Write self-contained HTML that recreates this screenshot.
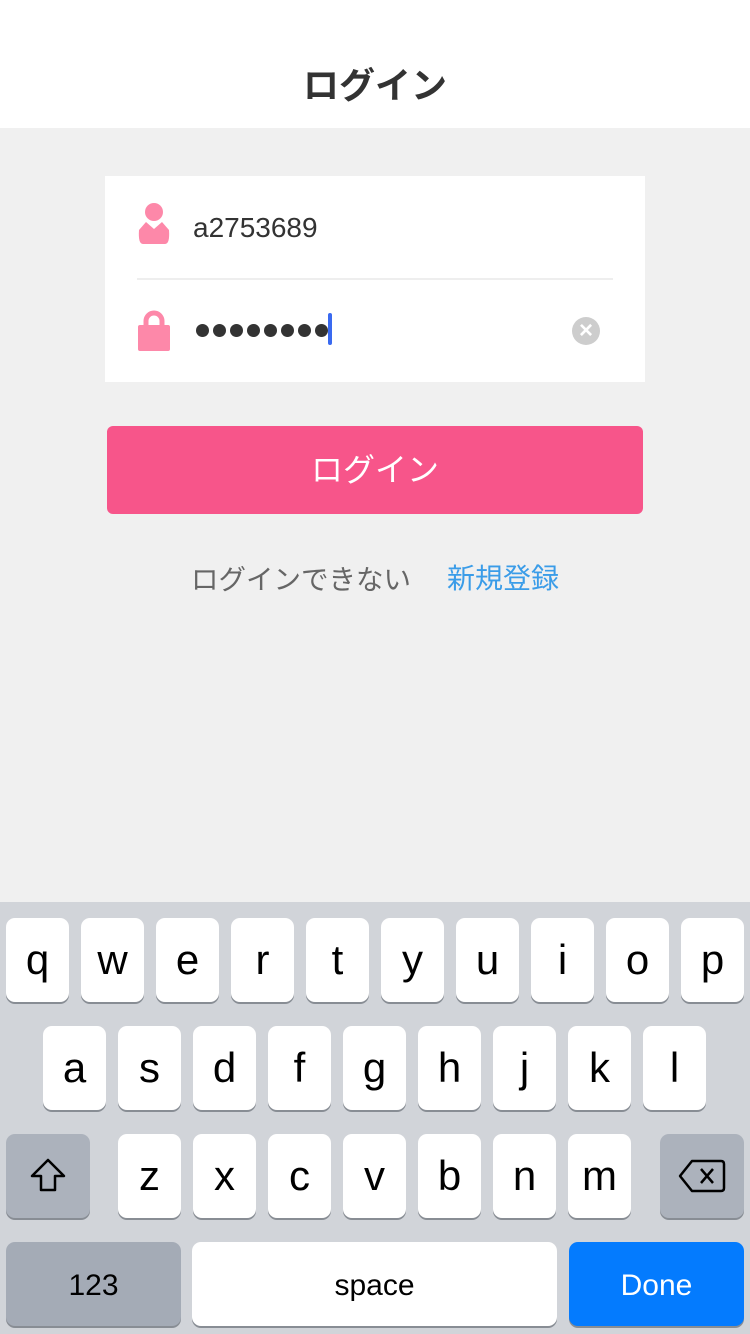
<!DOCTYPE html><html><head><meta charset="utf-8"><style>
*{margin:0;padding:0;box-sizing:border-box}
body{width:750px;height:1334px;background:#f0f0f0;font-family:"Liberation Sans","Noto Sans CJK JP",sans-serif;position:relative;overflow:hidden}
.a{position:absolute}
.hdr{left:0;top:0;width:750px;height:128px;background:#fff;text-align:center;font-size:36px;font-weight:bold;color:#333;line-height:172px}
.card{left:105px;top:176px;width:540px;height:206px;background:#fff}
.kb{left:0;top:902px;width:750px;height:432px;background:#d1d4d9}
.k{position:absolute;width:63px;height:84px;background:#fff;border-radius:9px;box-shadow:0 2px 0 #888d94;text-align:center;font-size:42px;line-height:84px;color:#000}
.d{background:#acb2bc}
.dot{position:absolute;top:148px;width:13px;height:13px;border-radius:50%;background:#333}
</style></head><body>
<div class="a hdr">ログイン</div>
<div class="a card">
 <svg class="a" style="left:32px;top:26px" width="36" height="42" viewBox="0 0 36 42"><circle cx="17" cy="10" r="9" fill="#fd88a9"/><path d="M2 28 L9 20 L17 27 L25 20 L32 28 Q33 42 28 42 L6 42 Q1 42 2 28Z" fill="#fd88a9"/></svg>
 <div class="a" style="left:88px;top:36px;font-size:28px;color:#333">a2753689</div>
 <div class="a" style="left:32px;top:102px;width:476px;height:2px;background:#eee"></div>
 <svg class="a" style="left:32px;top:134px" width="34" height="42" viewBox="0 0 34 42"><path d="M9 16 V11 A8 8 0 0 1 25 11 V16" stroke="#fd88a9" stroke-width="5" fill="none"/><rect x="1" y="15" width="32" height="26" rx="2" fill="#fd88a9"/></svg>
 <div class="dot" style="left:91px"></div><div class="dot" style="left:108px"></div><div class="dot" style="left:125px"></div><div class="dot" style="left:142px"></div><div class="dot" style="left:159px"></div><div class="dot" style="left:176px"></div><div class="dot" style="left:193px"></div><div class="dot" style="left:210px"></div>
 <div class="a" style="left:223px;top:137px;width:4px;height:32px;background:#3a6af0;border-radius:2px"></div>
 <div class="a" style="left:467px;top:141px;width:28px;height:28px;border-radius:50%;background:#cdcdcd;color:#fff;text-align:center;font-size:24px;line-height:28px;font-weight:bold">×</div>
</div>
<div class="a" style="left:107px;top:426px;width:536px;height:88px;background:#f7558a;border-radius:6px;color:#fff;font-size:32px;text-align:center;line-height:88px">ログイン</div>
<div class="a" style="left:191px;top:557px;font-size:27.5px;color:#666">ログインできない</div>
<div class="a" style="left:447px;top:557px;font-size:28px;color:#3a9ce8">新規登録</div>
<div class="a kb">
<div class="k" style="left:6px;top:16px">q</div><div class="k" style="left:81px;top:16px">w</div><div class="k" style="left:156px;top:16px">e</div><div class="k" style="left:231px;top:16px">r</div><div class="k" style="left:306px;top:16px">t</div><div class="k" style="left:381px;top:16px">y</div><div class="k" style="left:456px;top:16px">u</div><div class="k" style="left:531px;top:16px">i</div><div class="k" style="left:606px;top:16px">o</div><div class="k" style="left:681px;top:16px">p</div>
<div class="k" style="left:43px;top:124px">a</div><div class="k" style="left:118px;top:124px">s</div><div class="k" style="left:193px;top:124px">d</div><div class="k" style="left:268px;top:124px">f</div><div class="k" style="left:343px;top:124px">g</div><div class="k" style="left:418px;top:124px">h</div><div class="k" style="left:493px;top:124px">j</div><div class="k" style="left:568px;top:124px">k</div><div class="k" style="left:643px;top:124px">l</div>
<div class="k d" style="left:6px;top:232px;width:84px"><svg width="40" height="40" viewBox="0 0 40 40" style="margin-top:22px"><path d="M20 4 L36 20 H27 V34 H13 V20 H4 Z" fill="none" stroke="#000" stroke-width="2.5" stroke-linejoin="round"/></svg></div>
<div class="k" style="left:118px;top:232px">z</div><div class="k" style="left:193px;top:232px">x</div><div class="k" style="left:268px;top:232px">c</div><div class="k" style="left:343px;top:232px">v</div><div class="k" style="left:418px;top:232px">b</div><div class="k" style="left:493px;top:232px">n</div><div class="k" style="left:568px;top:232px">m</div>
<div class="k d" style="left:660px;top:232px;width:84px"><svg width="48" height="36" viewBox="0 0 48 36" style="margin-top:24px"><path d="M14 3 H43 Q46 3 46 6 V30 Q46 33 43 33 H14 L2 18 Z" fill="none" stroke="#000" stroke-width="2.5" stroke-linejoin="round"/><path d="M23 11 L35 25 M35 11 L23 25" stroke="#000" stroke-width="2.5"/></svg></div>
<div class="k d" style="left:6px;top:340px;width:175px;font-size:30px;line-height:88px;background:#a4abb6">123</div>
<div class="k" style="left:192px;top:340px;width:365px;font-size:30px;line-height:88px">space</div>
<div class="k" style="left:569px;top:340px;width:175px;font-size:30px;line-height:88px;background:#047bfe;color:#fff">Done</div>
</div>
</body></html>
